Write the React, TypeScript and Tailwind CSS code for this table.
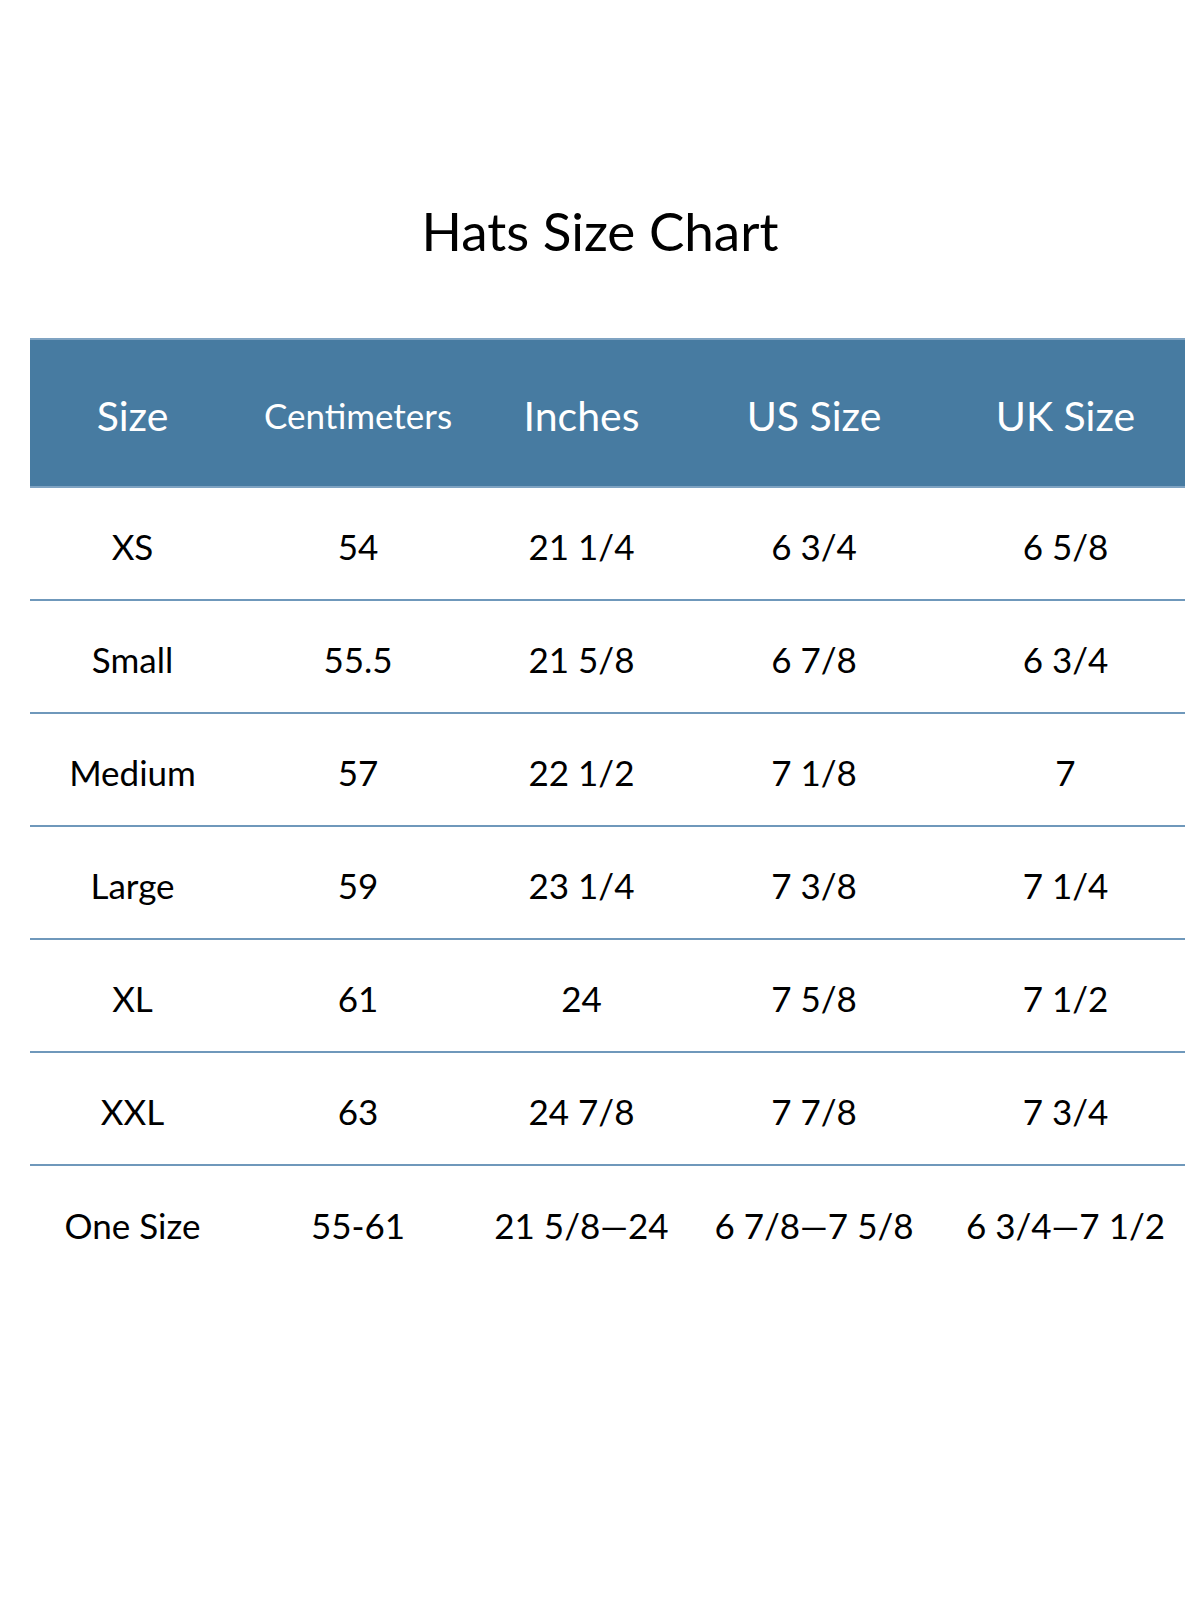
import React from 'react';

const headers = ['Size', 'Centimeters', 'Inches', 'US Size', 'UK Size'];

const rows = [
  ['XS', '54', '21 1/4', '6 3/4', '6 5/8'],
  ['Small', '55.5', '21 5/8', '6 7/8', '6 3/4'],
  ['Medium', '57', '22 1/2', '7 1/8', '7'],
  ['Large', '59', '23 1/4', '7 3/8', '7 1/4'],
  ['XL', '61', '24', '7 5/8', '7 1/2'],
  ['XXL', '63', '24 7/8', '7 7/8', '7 3/4'],
  ['One Size', '55-61', '21 5/8\u201424', '6 7/8\u20147 5/8', '6 3/4\u20147 1/2'],
];

const cols = 'grid grid-cols-[205px_246px_201px_264px_239px]';

const App = () => {
  return (
    <div className="min-h-[1600px] w-[1200px] bg-white font-['Lato',_'Open_Sans',_sans-serif] text-black">
      <div className="pt-[204px]">
        <h1 className="h-[53px] text-center text-[53px] leading-none font-normal">Hats Size Chart</h1>
      </div>

      <div className="ml-[30px] mt-[81px] w-[1155px]">
        {/* header band */}
        <div className={`${cols} h-[150px] items-center pt-[4px] bg-[#477ba1] border-t-2 border-b-2 border-t-[#7fa3c2] border-b-[#7fa3c2] text-white`}>
          {headers.map((h) => (
            <div key={h} className={`text-center leading-none ${h === 'Centimeters' ? 'text-[35px]' : 'text-[41px]'}`}>
              {h}
            </div>
          ))}
        </div>

        {rows.map((r, i) => (
          <div
            key={r[0]}
            className={`${cols} h-[113px] items-center pt-[6px] ${i < rows.length - 1 ? 'border-b-2 border-[#6f98bb]' : ''}`}
          >
            {r.map((c, j) => (
              <div key={j} className="text-center text-[35px] leading-none whitespace-nowrap">
                {c}
              </div>
            ))}
          </div>
        ))}
      </div>
    </div>
  );
};

export default App;
